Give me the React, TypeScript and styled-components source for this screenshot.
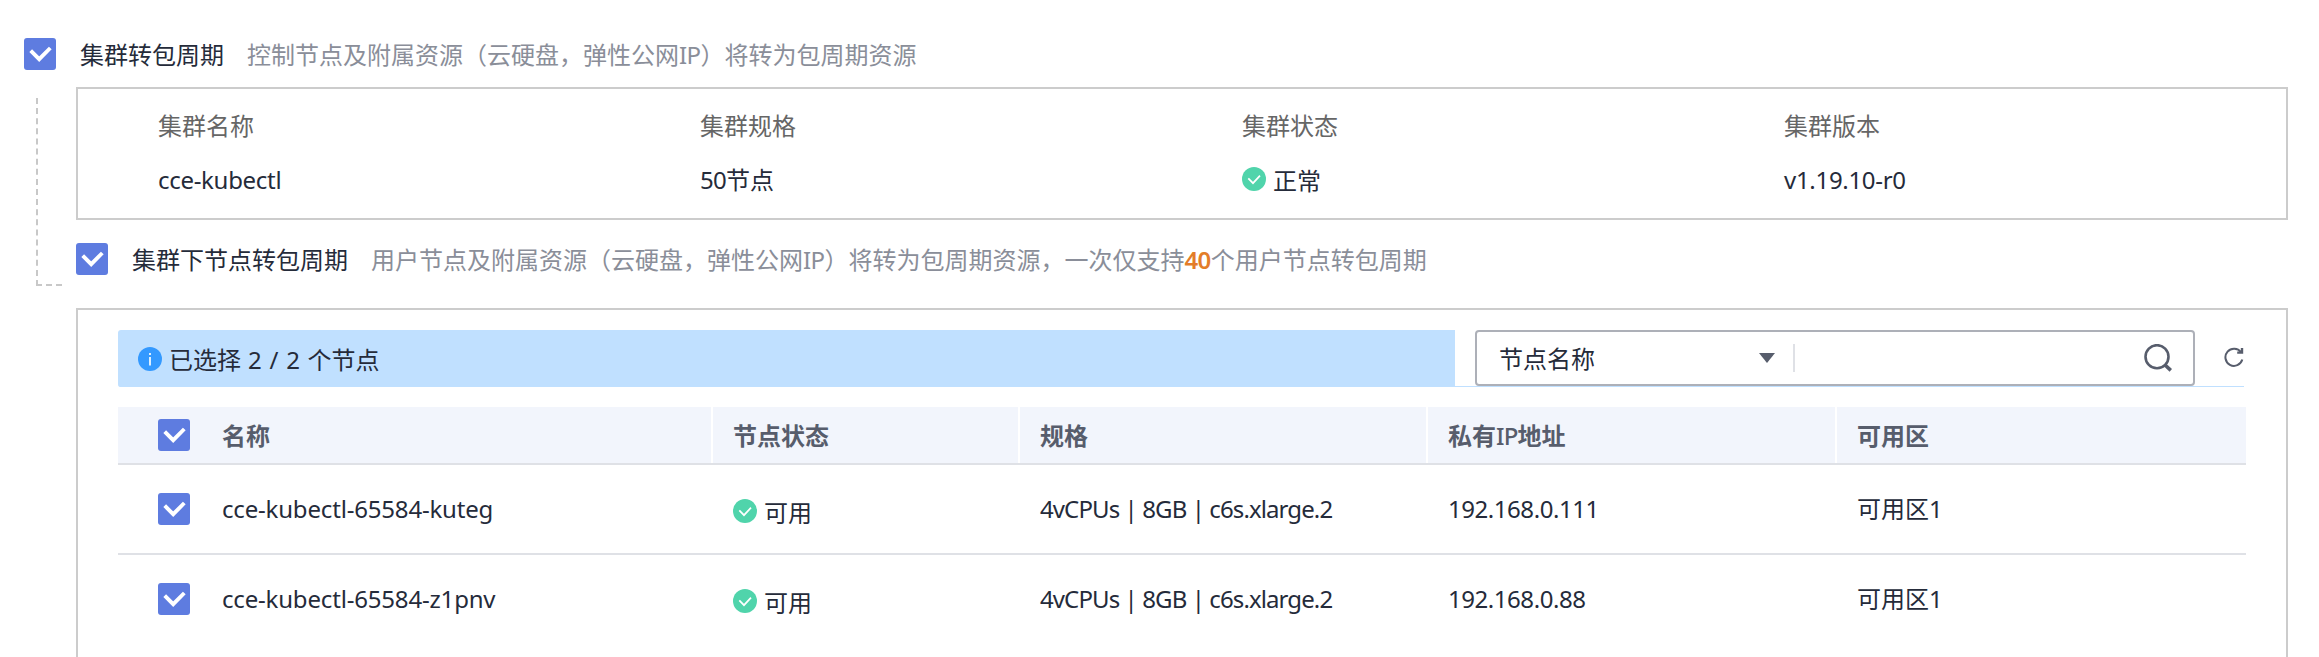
import React from "react";
import styled, { createGlobalStyle } from "styled-components";

const GlobalStyle = createGlobalStyle`
  * { box-sizing: border-box; }
  body {
    margin: 0;
    background: #fff;
    color: #252b3a;
    font-family: "Noto Sans CJK SC", sans-serif;
    font-size: 24px;
    font-weight: 400;
    line-height: 36px;
    overflow: hidden;
  }
`;

const Page = styled.main`
  width: 2319px;
  height: 657px;
  overflow: hidden;
  padding: 36px 31px 0 24px;
`;

const OptionRow = styled.label<{ $gap?: number }>`
  display: flex;
  align-items: center;
  height: 36px;
  white-space: pre;
  margin-bottom: ${(p) => p.$gap ?? 0}px;
`;

const OptionTitle = styled.span`
  margin: 0 23px 0 24px;
`;

const Hint = styled.span`
  color: #8a8e99;
`;

const Latin = styled.span<{ $spacing?: number; $weight?: number }>`
  font-family: "Noto Sans", sans-serif;
  font-weight: ${(p) => p.$weight ?? 400};
  font-size: 24px;
  line-height: 1;
  letter-spacing: ${(p) => p.$spacing ?? 0}px;
`;

const Limit = styled(Latin)`
  color: #e37d29;
  font-weight: 600;
`;

const Tree = styled.div`
  display: flex;
`;

const Branch = styled.div`
  flex: none;
  width: 26px;
  height: 188px;
  margin: 26px 14px 0 12px;
  border-left: 2px dashed #c8c8c8;
  border-bottom: 2px dashed #c8c8c8;
`;

const TreeBody = styled.div`
  flex: 1;
  min-width: 0;
  padding-top: 15px;
`;

const ClusterPanel = styled.section`
  display: grid;
  grid-template-columns: repeat(4, 542px);
  height: 133px;
  margin-bottom: 21px;
  padding: 18px 0 0 80px;
  border: 2px solid #ccc;
`;

const Field = styled.div`
  display: flex;
  flex-direction: column;
  gap: 18px;
`;

const FieldLabel = styled.div`
  color: #666;
`;

const FieldValue = styled.div`
  height: 36px;
  white-space: pre;
`;

const NodePanel = styled.section`
  height: 420px;
  padding: 20px 40px 0;
  border: 2px solid #ccc;
`;

const Toolbar = styled.div`
  display: flex;
  align-items: flex-start;
  width: 2126px;
  height: 57px;
  margin-bottom: 20px;
  border-radius: 3px 0 0 3px;
  border-bottom: 1px solid #c0e0ff;
`;

const Banner = styled.div`
  display: flex;
  align-items: center;
  width: 1337px;
  height: 57px;
  padding: 1px 0 0 20px;
  margin-right: 20px;
  border-radius: 3px 0 0 3px;
  background: #c0e0ff;
  white-space: pre;

  svg { margin: 0 7px 0 0; }
`;

const SearchBox = styled.div`
  display: flex;
  align-items: center;
  width: 720px;
  height: 56px;
  padding: 0 21px 0 22px;
  border: 2px solid #adb0b8;
  border-radius: 4px;
`;

const SearchField = styled.span`
  width: 260px;
`;

const Separator = styled.i`
  width: 2px;
  height: 28px;
  margin: 0 auto 0 18px;
  background: #dfe1e6;
`;

const RefreshButton = styled.span`
  display: flex;
  margin: 17px 0 0 29px;
`;

const columns = "84px 511px 307px 408px 409px 409px";

const HeadRow = styled.div`
  display: grid;
  grid-template-columns: ${columns};
  height: 58px;
  background: #f2f5fc;
  border-bottom: 2px solid #dfe1e6;
  color: #575d6c;
  font-weight: 700;
`;

const HeadCell = styled.div<{ $divided?: boolean }>`
  display: flex;
  align-items: center;
  padding: 0 0 0 20px;
  border-right: ${(p) => (p.$divided ? "2px solid #fff" : "none")};
`;

const HeadCheck = styled.div`
  padding: 12px 0 0 40px;
`;

const Row = styled.div`
  display: grid;
  grid-template-columns: ${columns};
  height: 90px;
  border-bottom: 2px solid #dfe1e6;

  &:last-child { border-bottom: none; }
`;

const Cell = styled.div`
  padding: 25px 0 0 20px;
  white-space: pre;
`;

const CheckCell = styled.div`
  padding: 28px 0 0 40px;
`;

const Status = styled.span<{ $drop: number }>`
  display: flex;
  align-items: center;
  gap: 7px;
  height: 36px;
  margin-top: ${(p) => p.$drop}px;

  svg { margin-top: -2px; }
`;

const CheckMark = styled.svg`
  display: block;
  flex: none;
`;

const Checkbox = () => (
  <CheckMark width="32" height="32" viewBox="0 0 32 32">
    <rect width="32" height="32" rx="3" fill="#5e7ce0" />
    <path d="M6.7 12.7 15.2 21.2 26.3 10" fill="none" stroke="#fff" strokeWidth="3.9" />
  </CheckMark>
);

const OkIcon = () => (
  <svg width="24" height="24" viewBox="0 0 24 24">
    <circle cx="12" cy="12" r="12" fill="#50d4ab" />
    <path d="M6.3 11.3 11 16.2 18 8.7" fill="none" stroke="#fff" strokeWidth="1.7" />
  </svg>
);

const InfoIcon = () => (
  <svg width="24" height="24" viewBox="0 0 24 24">
    <circle cx="12" cy="12" r="12" fill="#3399ff" />
    <path d="M12 10v8.5M12 6v2" stroke="#dcefff" strokeWidth="2" />
  </svg>
);

const ArrowIcon = () => (
  <svg width="16" height="10" viewBox="0 0 16 10">
    <path d="M0 0H16L8 10Z" fill="#575d6c" />
  </svg>
);

const SearchIcon = () => (
  <svg width="28" height="28" viewBox="0 0 28 28">
    <circle cx="13" cy="12.7" r="11.5" fill="none" stroke="#575d6c" strokeWidth="2.6" />
    <path d="M20.8 20.8 26.8 26.4" stroke="#575d6c" strokeWidth="3.6" />
  </svg>
);

const RefreshIcon = () => (
  <svg width="20" height="20" viewBox="0 0 20 20">
    <path d="M17 5.2A8.6 8.6 0 1 0 18.3 12.6" fill="none" stroke="#575d6c" strokeWidth="2" />
    <path d="M18 1V5.6H13.2" fill="none" stroke="#575d6c" strokeWidth="2.4" />
  </svg>
);

const nodes = [
  { name: "cce-kubectl-65584-kuteg", spec: "4vCPUs | 8GB | c6s.xlarge.2", ip: "192.168.0.111" },
  { name: "cce-kubectl-65584-z1pnv", spec: "4vCPUs | 8GB | c6s.xlarge.2", ip: "192.168.0.88" },
];

export default function App() {
  return (
    <Page>
      <GlobalStyle />
      <OptionRow>
        <Checkbox />
        <OptionTitle>集群转包周期</OptionTitle>
        <Hint>控制节点及附属资源（云硬盘，弹性公网<Latin $spacing={-0.6}>IP</Latin>）将转为包周期资源</Hint>
      </OptionRow>
      <Tree>
        <Branch />
        <TreeBody>
          <ClusterPanel>
            <Field>
              <FieldLabel>集群名称</FieldLabel>
              <FieldValue><Latin $spacing={-0.3}>cce-kubectl</Latin></FieldValue>
            </Field>
            <Field>
              <FieldLabel>集群规格</FieldLabel>
              <FieldValue><Latin $spacing={-0.7}>50</Latin>节点</FieldValue>
            </Field>
            <Field>
              <FieldLabel>集群状态</FieldLabel>
              <FieldValue><Status $drop={1}><OkIcon />正常</Status></FieldValue>
            </Field>
            <Field>
              <FieldLabel>集群版本</FieldLabel>
              <FieldValue><Latin $spacing={-0.3}>v1.19.10-r0</Latin></FieldValue>
            </Field>
          </ClusterPanel>
          <OptionRow $gap={31}>
            <Checkbox />
            <OptionTitle>集群下节点转包周期</OptionTitle>
            <Hint>
              用户节点及附属资源（云硬盘，弹性公网<Latin $spacing={-0.6}>IP</Latin>）将转为包周期资源，一次仅支持<Limit $spacing={-0.6}>40</Limit>个用户节点转包周期
            </Hint>
          </OptionRow>
          <NodePanel>
            <Toolbar>
              <Banner>
                <InfoIcon />
                <span>已选择<Latin $spacing={0.75}> 2 / 2 </Latin>个节点</span>
              </Banner>
              <SearchBox>
                <SearchField>节点名称</SearchField>
                <ArrowIcon />
                <Separator />
                <SearchIcon />
              </SearchBox>
              <RefreshButton><RefreshIcon /></RefreshButton>
            </Toolbar>
            <HeadRow>
              <HeadCheck><Checkbox /></HeadCheck>
              <HeadCell $divided>名称</HeadCell>
              <HeadCell $divided>节点状态</HeadCell>
              <HeadCell $divided>规格</HeadCell>
              <HeadCell $divided><span>私有<Latin $spacing={-0.8} $weight={500}>IP</Latin>地址</span></HeadCell>
              <HeadCell>可用区</HeadCell>
            </HeadRow>
            {nodes.map((node) => (
              <Row key={node.name}>
                <CheckCell><Checkbox /></CheckCell>
                <Cell><Latin $spacing={-0.18}>{node.name}</Latin></Cell>
                <Cell><Status $drop={4}><OkIcon />可用</Status></Cell>
                <Cell><Latin $spacing={-0.9}>{node.spec}</Latin></Cell>
                <Cell><Latin $spacing={-0.45}>{node.ip}</Latin></Cell>
                <Cell>可用区<Latin>1</Latin></Cell>
              </Row>
            ))}
          </NodePanel>
        </TreeBody>
      </Tree>
    </Page>
  );
}
